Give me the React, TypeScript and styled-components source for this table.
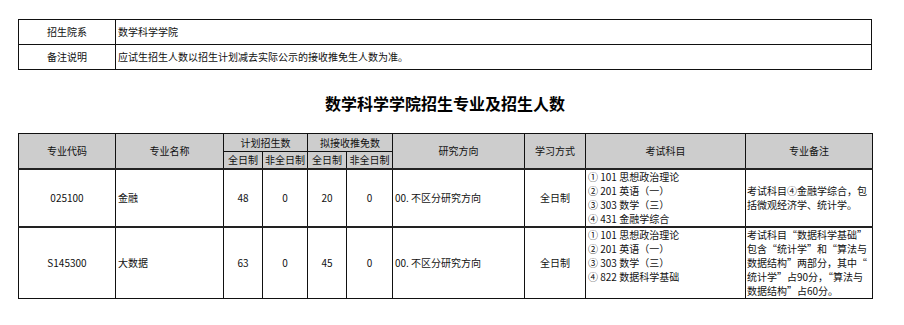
import React from 'react';
import styled, { createGlobalStyle } from 'styled-components';

const GlobalStyle = createGlobalStyle`
  html, body {
    margin: 0;
    padding: 0;
    background: #fff;
  }
  body {
    font-family: "Noto Sans CJK SC", "Microsoft YaHei", sans-serif;
    font-size: 10px;
    color: #111;
  }
`;

const Page = styled.div`
  width: 854px;
  padding: 19px 0 0 18px;
`;

const Table = styled.table`
  width: 854px;
  border-collapse: collapse;
  table-layout: fixed;

  td,
  th {
    border: 1px solid #111;
    padding: 0 2px;
    font-weight: 400;
    line-height: 14px;
    overflow: hidden;
    white-space: nowrap;
  }
`;

const InfoRow = styled.tr`
  height: 25px;
`;

const InfoLabel = styled.td`
  text-align: center;
`;

const Title = styled.h1`
  margin: 22px 0 0;
  height: 41px;
  font-size: 16px;
  line-height: 22px;
  font-weight: 700;
  text-align: center;
  color: #000;
`;

const HeadCell = styled.th<{ $h?: number }>`
  background: #cdcdcd;
  text-align: center;
  height: ${({ $h }) => ($h ? `${$h}px` : 'auto')};
`;

const DataRow = styled.tr<{ $h: number }>`
  height: ${({ $h }) => $h}px;

  td {
    border-top: 2px solid #222;
  }
`;

const Cell = styled.td<{ $align?: 'left' | 'center' }>`
  text-align: ${({ $align }) => $align || 'center'};
  vertical-align: middle;
`;

const Lines = styled.td`
  text-align: left;
  vertical-align: top;
`;

const Line = styled.div`
  height: 14px;
`;

const Note = styled.td`
  text-align: left;
  vertical-align: middle;
  padding: 0 1px !important;
`;

const cols = [97, 108, 39, 45, 39, 46, 132, 61, 160, 127];

const rows = [
  {
    code: '025100',
    name: '金融',
    plan: ['48', '0'],
    exempt: ['20', '0'],
    subjects: ['① 101 思想政治理论', '② 201 英语（一）', '③ 303 数学（三）', '④ 431 金融学综合'],
    note: ['考试科目④金融学综合，包', '括微观经济学、统计学。'],
    h: 56,
  },
  {
    code: 'S145300',
    name: '大数据',
    plan: ['63', '0'],
    exempt: ['45', '0'],
    subjects: ['① 101 思想政治理论', '② 201 英语（一）', '③ 303 数学（三）', '④ 822 数据科学基础'],
    note: [
      '考试科目“数据科学基础”',
      '包含“统计学”和“算法与',
      '数据结构”两部分，其中“',
      '统计学”占90分，“算法与',
      '数据结构”占60分。',
    ],
    h: 70,
  },
];

export default function App() {
  return (
    <Page>
      <GlobalStyle />
      <Table>
        <colgroup>
          <col style={{ width: 97 }} />
          <col />
        </colgroup>
        <tbody>
          <InfoRow>
            <InfoLabel>招生院系</InfoLabel>
            <td>数学科学学院</td>
          </InfoRow>
          <InfoRow>
            <InfoLabel>备注说明</InfoLabel>
            <td>应试生招生人数以招生计划减去实际公示的接收推免生人数为准。</td>
          </InfoRow>
        </tbody>
      </Table>

      <Title>数学科学学院招生专业及招生人数</Title>

      <Table>
        <colgroup>
          {cols.map((w, i) => (
            <col key={i} style={{ width: w }} />
          ))}
        </colgroup>
        <thead>
          <tr>
            <HeadCell rowSpan={2}>专业代码</HeadCell>
            <HeadCell rowSpan={2}>专业名称</HeadCell>
            <HeadCell colSpan={2} $h={17}>计划招生数</HeadCell>
            <HeadCell colSpan={2}>拟接收推免数</HeadCell>
            <HeadCell rowSpan={2}>研究方向</HeadCell>
            <HeadCell rowSpan={2}>学习方式</HeadCell>
            <HeadCell rowSpan={2}>考试科目</HeadCell>
            <HeadCell rowSpan={2}>专业备注</HeadCell>
          </tr>
          <tr>
            <HeadCell $h={16}>全日制</HeadCell>
            <HeadCell>非全日制</HeadCell>
            <HeadCell>全日制</HeadCell>
            <HeadCell>非全日制</HeadCell>
          </tr>
        </thead>
        <tbody>
          {rows.map((r) => (
            <DataRow key={r.code} $h={r.h}>
              <Cell>{r.code}</Cell>
              <Cell $align="left">{r.name}</Cell>
              <Cell>{r.plan[0]}</Cell>
              <Cell>{r.plan[1]}</Cell>
              <Cell>{r.exempt[0]}</Cell>
              <Cell>{r.exempt[1]}</Cell>
              <Cell $align="left">00. 不区分研究方向</Cell>
              <Cell>全日制</Cell>
              <Lines>
                {r.subjects.map((s) => (
                  <Line key={s}>{s}</Line>
                ))}
              </Lines>
              <Note>
                {r.note.map((n) => (
                  <Line key={n}>{n}</Line>
                ))}
              </Note>
            </DataRow>
          ))}
        </tbody>
      </Table>
    </Page>
  );
}
